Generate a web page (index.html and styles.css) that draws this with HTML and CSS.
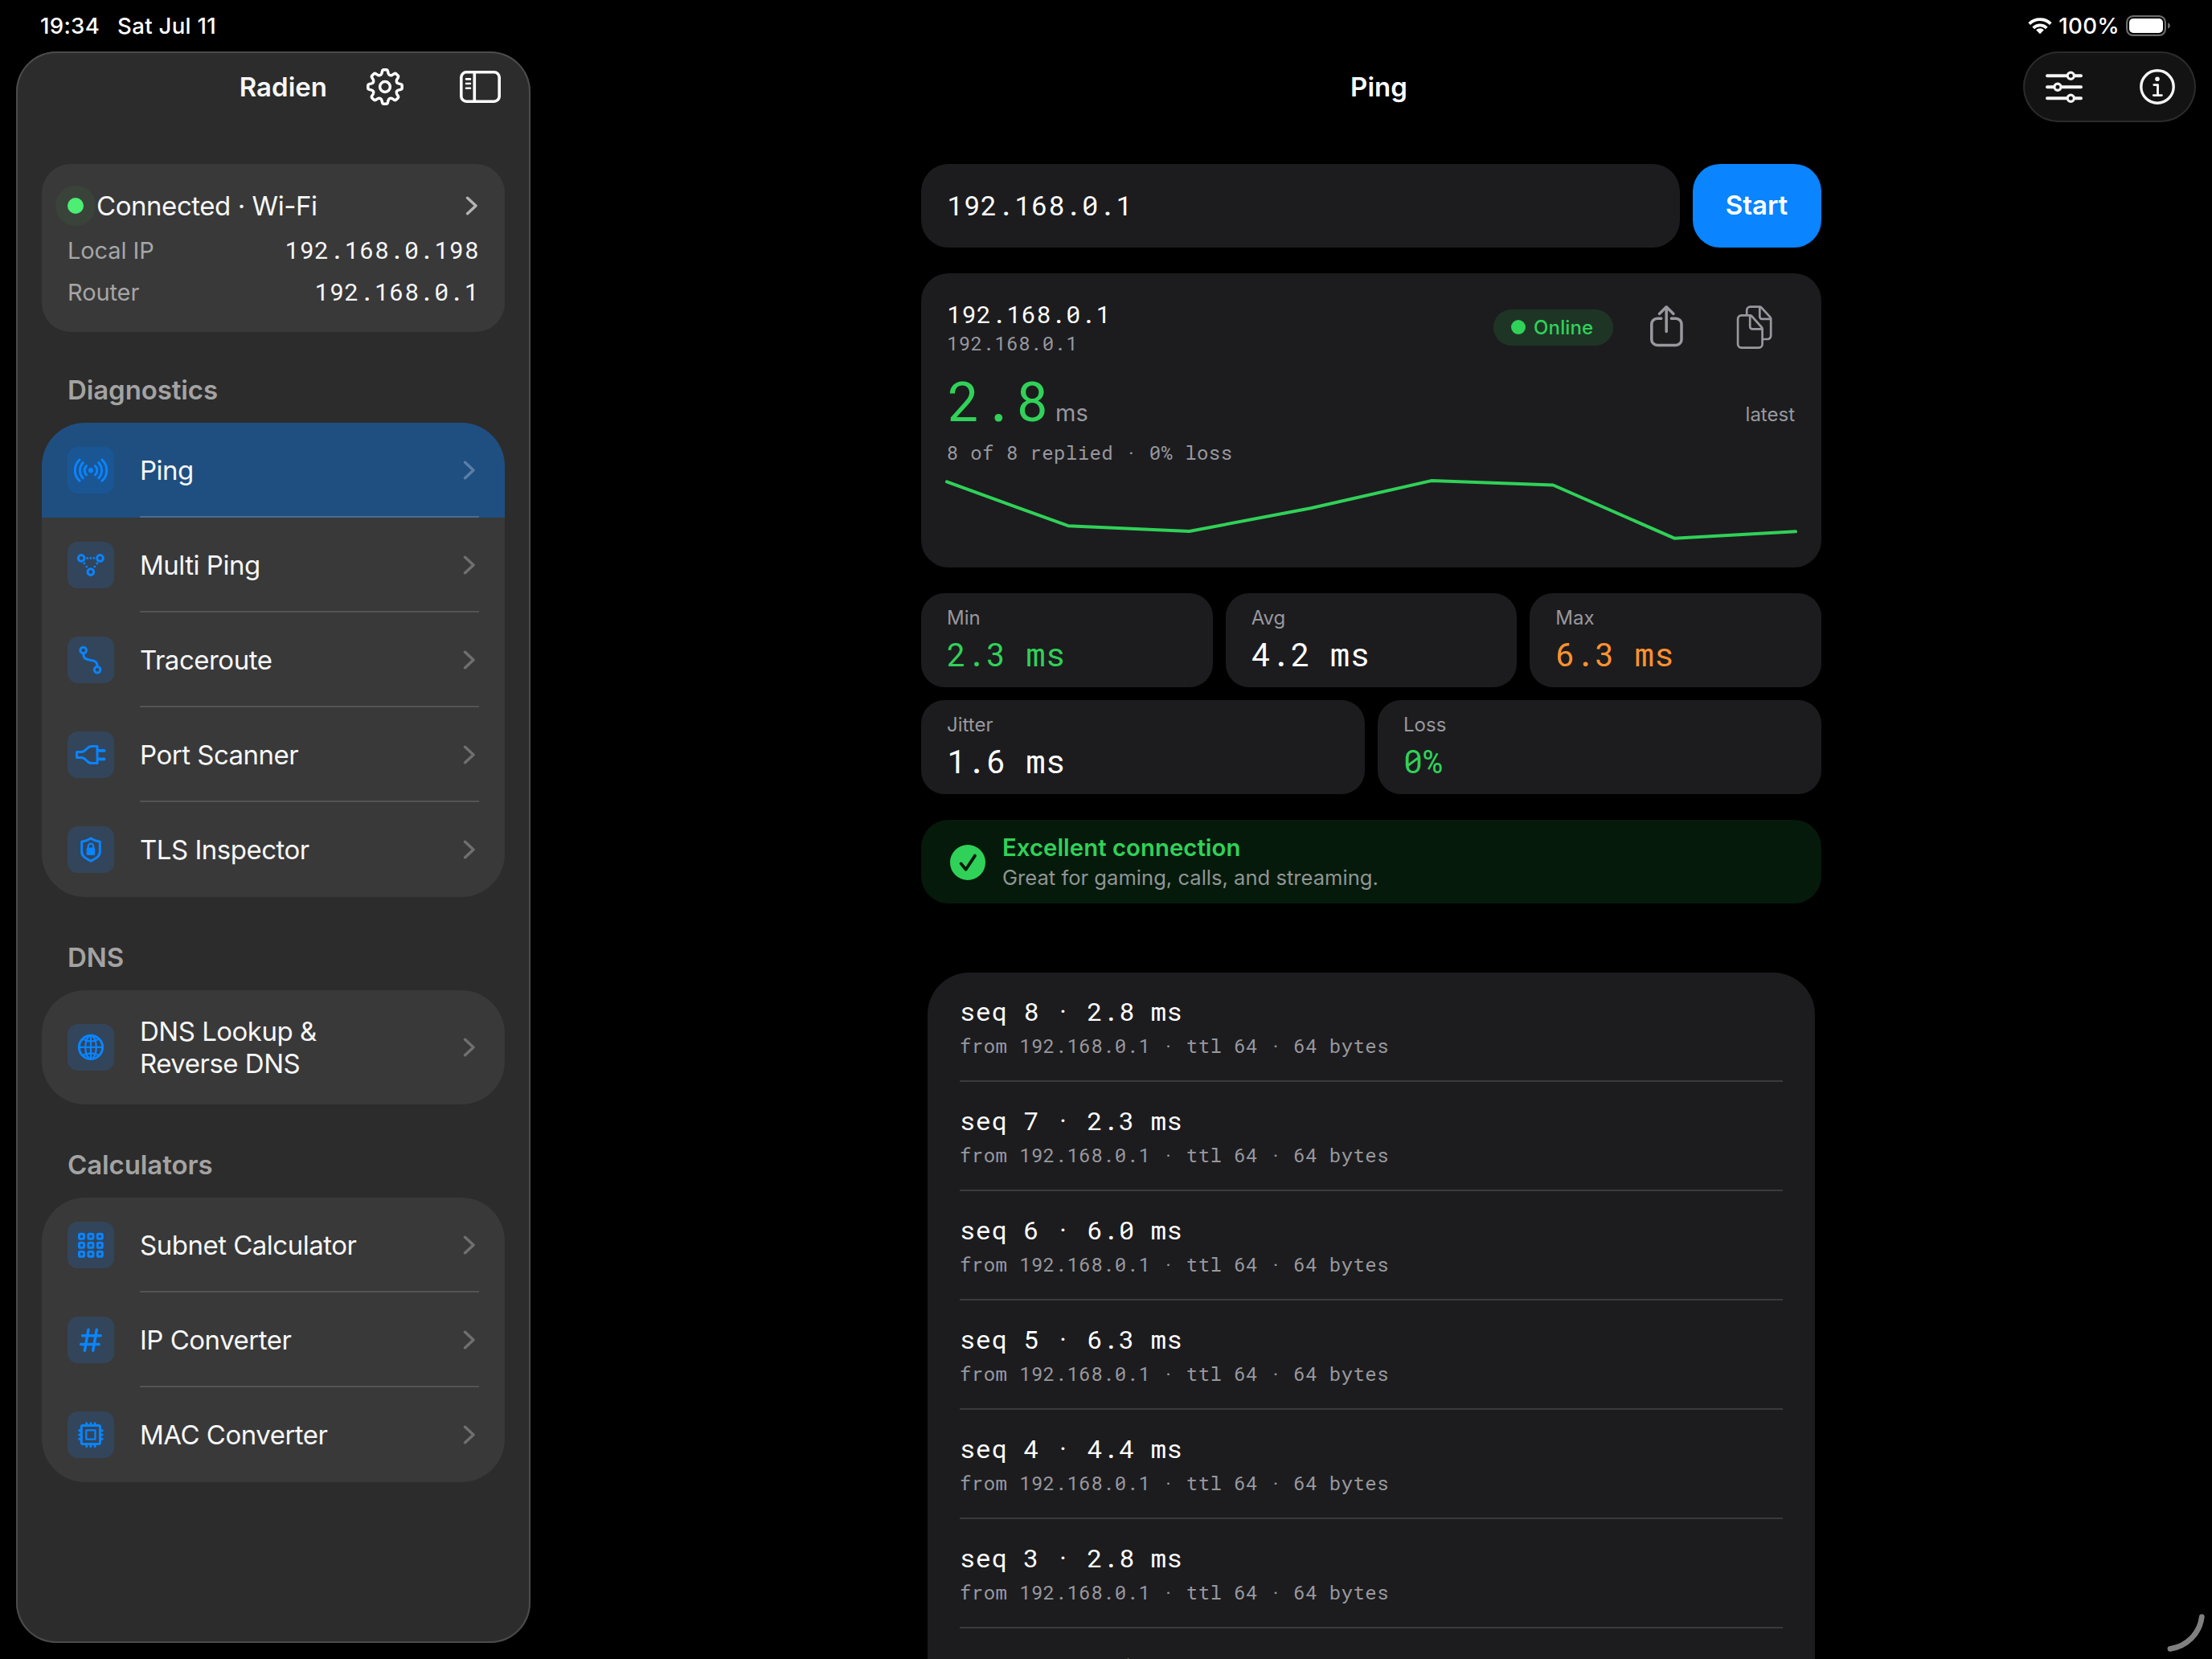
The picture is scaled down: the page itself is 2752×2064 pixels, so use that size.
FILE: index.html
```
<!DOCTYPE html>
<html lang="en">
<head>
<meta charset="utf-8">
<title>Radien</title>
<link rel="stylesheet" href="styles.css">
</head>
<body>
<svg class="defs" aria-hidden="true">
  <symbol id="chevron" viewBox="0 0 16 24"><path d="M2.6 2.3 13 12 2.6 21.7"/></symbol>
  <path id="tooth" d="M-6-14.5Q-4.5-15.1-4.1-16.6L-3.4-19.6Q-3-21.2-1.5-21.2H1.5Q3-21.2 3.4-19.6L4.1-16.6Q4.5-15.1 6-14.5"/>
</svg>

<header class="status">
  <span class="status-time">19:34</span>
  <span class="status-date">Sat Jul 11</span>
  <svg class="wifi" width="32" height="24" viewBox="0 0 32 24"><path class="line" d="M2.7 9.6A19 19 0 0 1 29.3 9.6M7.7 14.8A11.8 11.8 0 0 1 24.3 14.8"/><path class="fill" d="M16 22.3l-4.9-5a7 7 0 0 1 9.8 0z"/></svg>
  <span class="status-battery">100%</span>
  <svg width="56" height="26" viewBox="0 0 56 26"><rect x="1.1" y="1.1" width="47.8" height="23.8" rx="7.6" fill="none" stroke="#6c6c6c" stroke-width="2.2"/><rect x="4" y="4" width="42" height="18" rx="5" fill="#fff"/><path d="M52 9.2q3 1.2 3 3.8t-3 3.8z" fill="#6c6c6c"/></svg>
</header>

<div class="app">
  <aside class="sidebar">
    <div class="sidebar-bar">
      <h1 class="title">Radien</h1>
      <svg class="icon gear" width="46" height="46" viewBox="-23 -23 46 46"><use href="#tooth"/><use href="#tooth" transform="rotate(45)"/><use href="#tooth" transform="rotate(90)"/><use href="#tooth" transform="rotate(135)"/><use href="#tooth" transform="rotate(180)"/><use href="#tooth" transform="rotate(225)"/><use href="#tooth" transform="rotate(270)"/><use href="#tooth" transform="rotate(315)"/><circle r="6.4"/></svg>
      <svg class="icon panel" width="51" height="40" viewBox="0 0 51 40"><rect x="1.8" y="1.8" width="47.4" height="36.4" rx="6.5"/><path d="M18.3 2v36"/><path class="thin" d="M8 10.4h5M8 16h5M8 21.7h5"/></svg>
    </div>

    <section class="network">
      <div class="network-head">
        <i class="pulse"></i>
        <span class="network-name">Connected · Wi-Fi</span>
        <svg class="chevron bright" width="16" height="24"><use href="#chevron"/></svg>
      </div>
      <div class="network-row"><span>Local IP</span><b class="mono">192.168.0.198</b></div>
      <div class="network-row"><span>Router</span><b class="mono">192.168.0.1</b></div>
    </section>

    <h2 class="group-title first">Diagnostics</h2>
    <nav class="group">
      <a class="item active">
        <svg class="tile" viewBox="0 0 58 58"><circle class="solid" cx="29" cy="29.2" r="3.1"/><path d="M15 16.2A17.7 17.7 0 0 0 15 42.2M19.2 19.7A14 14 0 0 0 19.2 38.7M23.6 23.6A7.6 7.6 0 0 0 23.6 34.8M43 16.2A17.7 17.7 0 0 1 43 42.2M38.8 19.7A14 14 0 0 1 38.8 38.7M34.4 23.6A7.6 7.6 0 0 1 34.4 34.8"/></svg>
        <span class="label">Ping</span>
        <svg class="chevron" width="16" height="24"><use href="#chevron"/></svg>
      </a>
      <a class="item">
        <svg class="tile" viewBox="0 0 58 58"><circle cx="17.2" cy="20.4" r="3.8"/><circle cx="40.5" cy="20.4" r="3.8"/><circle cx="28.8" cy="37.6" r="3.8"/><g class="solid"><circle cx="24.7" cy="20.4" r="1.4"/><circle cx="28.8" cy="20.4" r="1.4"/><circle cx="32.9" cy="20.4" r="1.4"/><circle cx="20.9" cy="27" r="1.4"/><circle cx="23.8" cy="31.1" r="1.4"/><circle cx="36.7" cy="27" r="1.4"/><circle cx="33.8" cy="31.1" r="1.4"/></g></svg>
        <span class="label">Multi Ping</span>
        <svg class="chevron" width="16" height="24"><use href="#chevron"/></svg>
      </a>
      <a class="item">
        <svg class="tile" viewBox="0 0 58 58"><circle cx="19.7" cy="17" r="3.8"/><circle cx="37.1" cy="41.2" r="3.8"/><path d="M19.7 21.3C19.7 27 22.4 28.2 28.4 29.2 34.4 30.2 37.1 31.6 37.1 36.9"/></svg>
        <span class="label">Traceroute</span>
        <svg class="chevron" width="16" height="24"><use href="#chevron"/></svg>
      </a>
      <a class="item">
        <svg class="tile" viewBox="0 0 58 58"><path d="M11.6 25.6H17.2C23.6 25.6 23.2 18.4 30.2 18.4H37V39.6H30.2C23.2 39.6 23.6 32.5 17.2 32.5H11.6Z"/><path class="prong" d="M38.5 23.9H45.6M38.5 34.3H45.6"/></svg>
        <span class="label">Port Scanner</span>
        <svg class="chevron" width="16" height="24"><use href="#chevron"/></svg>
      </a>
      <a class="item">
        <svg class="tile" viewBox="0 0 58 58"><path d="M29 15C25.6 17.4 21.6 18.7 17.7 19.2V31.4C17.7 36.8 21.6 39.6 29 43.2 36.4 39.6 40.3 36.8 40.3 31.4V19.2C36.4 18.7 32.4 17.4 29 15Z"/><rect class="solid" x="23.6" y="26.6" width="10.6" height="9.4" rx="1.6"/><path class="hair" d="M25.7 27.4V24.9a3.25 3.25 0 0 1 6.5 0V27.4"/></svg>
        <span class="label">TLS Inspector</span>
        <svg class="chevron" width="16" height="24"><use href="#chevron"/></svg>
      </a>
    </nav>

    <h2 class="group-title">DNS</h2>
    <nav class="group">
      <a class="item tall">
        <svg class="tile" viewBox="0 0 58 58"><circle cx="29" cy="28.9" r="14.6"/><g class="hair"><ellipse cx="29" cy="28.9" rx="6.8" ry="14.4"/><path d="M29 14.5V43.3M14.5 28.9H43.5M18.4 18.6Q29 24.4 39.6 18.6M18.4 39.2Q29 33.4 39.6 39.2"/></g></svg>
        <span class="label">DNS Lookup &amp;<br>Reverse DNS</span>
        <svg class="chevron" width="16" height="24"><use href="#chevron"/></svg>
      </a>
    </nav>

    <h2 class="group-title">Calculators</h2>
    <nav class="group">
      <a class="item">
        <svg class="tile" viewBox="0 0 58 58"><rect x="14.5" y="15.3" width="6" height="6" rx="1.3"/><rect x="25.9" y="15.3" width="6" height="6" rx="1.3"/><rect x="37.3" y="15.3" width="6" height="6" rx="1.3"/><rect x="14.5" y="26.2" width="6" height="6" rx="1.3"/><rect x="25.9" y="26.2" width="6" height="6" rx="1.3"/><rect x="37.3" y="26.2" width="6" height="6" rx="1.3"/><rect x="14.5" y="37.2" width="6" height="6" rx="1.3"/><rect x="25.9" y="37.2" width="6" height="6" rx="1.3"/><rect x="37.3" y="37.2" width="6" height="6" rx="1.3"/></svg>
        <span class="label">Subnet Calculator</span>
        <svg class="chevron" width="16" height="24"><use href="#chevron"/></svg>
      </a>
      <a class="item">
        <svg class="tile" viewBox="0 0 58 58"><path class="hash" d="M26 16.2 21.4 42.4M36.3 16.2 31.7 42.4M18.6 23.7H41.2M16.6 34.4H39.2"/></svg>
        <span class="label">IP Converter</span>
        <svg class="chevron" width="16" height="24"><use href="#chevron"/></svg>
      </a>
      <a class="item">
        <svg class="tile" viewBox="0 0 58 58"><rect x="17.3" y="17.4" width="23.2" height="23.2" rx="1.8"/><rect class="hair" x="23.3" y="23.4" width="11.2" height="11.2"/><path d="M23.7 16V14.8M28.9 16V14.8M34.1 16V14.8M23.7 42V43.4M28.9 42V43.4M34.1 42V43.4M16 23.8H14.7M16 29H14.7M16 34.2H14.7M42 23.8H43.2M42 29H43.2M42 34.2H43.2"/></svg>
        <span class="label">MAC Converter</span>
        <svg class="chevron" width="16" height="24"><use href="#chevron"/></svg>
      </a>
    </nav>
  </aside>

  <main class="main">
    <div class="main-bar">
      <h1 class="title">Ping</h1>
      <div class="tools">
        <svg class="icon sliders" width="50" height="48" viewBox="0 0 50 48"><path d="M4 10.3H46M4 24.3H46M4 38.3H46"/><g class="knobs"><circle cx="33.3" cy="10.3" r="4.1"/><circle cx="17" cy="24.3" r="4.1"/><circle cx="33.3" cy="38.3" r="4.1"/></g></svg>
        <svg class="icon info" width="46" height="46" viewBox="0 0 46 46"><circle cx="23" cy="23" r="20.2"/><circle class="dot" cx="23" cy="13.3" r="2.8"/><path d="M18.8 20.6H23.5V33.2M18.3 33.6H28.4"/></svg>
      </div>
    </div>

    <div class="content">
      <div class="search">
        <div class="field mono">192.168.0.1</div>
        <button class="start">Start</button>
      </div>

      <section class="result">
        <div class="result-head">
          <div class="host"><div class="host-name mono">192.168.0.1</div><div class="host-ip mono">192.168.0.1</div></div>
          <div class="badge"><i class="badge-dot"></i>Online</div>
          <svg class="icon share" width="44" height="56" viewBox="0 0 44 56"><path d="M15.8 18.2H10.8a7 7 0 0 0-7 7V44.4a7 7 0 0 0 7 7H34a7 7 0 0 0 7-7V25.2a7 7 0 0 0-7-7H28.4M22.2 34.6V4M13.4 12.4 22.2 3.8 31 12.4"/></svg>
          <svg class="icon copy" width="48" height="58" viewBox="0 0 48 58"><path d="M18.2 14.3H7.5a4.4 4.4 0 0 0-4.4 4.4V50.2a4.4 4.4 0 0 0 4.4 4.4H29.2a4.4 4.4 0 0 0 4.4-4.4V31.2Q33.6 30 32.6 29L20.2 15.2Q19.4 14.3 18.2 14.3V28.4a3 3 0 0 0 3 3H33.4M14.2 13.8V8.1a4.4 4.4 0 0 1 4.4-4.4H30.2Q31.4 3.7 32.2 4.5L43.2 16.4Q44.2 17.4 44.2 18.6V39.6a4.4 4.4 0 0 1-4.4 4.4H34.6M30.3 4.2V16a2.8 2.8 0 0 0 2.8 2.8H44"/></svg>
        </div>
        <div class="latency"><span class="latency-value mono">2.8</span><span class="latency-unit">ms</span><span class="latency-note">latest</span></div>
        <div class="replies mono">8 of 8 replied · 0% loss</div>
        <svg class="chart" width="1056" height="90" viewBox="0 0 1056 90"><polyline points="0,8.4 150.9,63.2 301.7,70 452.6,41.2 603.4,7 754.3,12.5 905.1,78.7 1056,70.3"/></svg>
      </section>

      <section class="stats">
        <div class="stats-row">
          <div class="stat"><div class="stat-name">Min</div><div class="stat-value mono good">2.3 ms</div></div>
          <div class="stat"><div class="stat-name">Avg</div><div class="stat-value mono">4.2 ms</div></div>
          <div class="stat"><div class="stat-name">Max</div><div class="stat-value mono warn">6.3 ms</div></div>
        </div>
        <div class="stats-row">
          <div class="stat"><div class="stat-name">Jitter</div><div class="stat-value mono">1.6 ms</div></div>
          <div class="stat"><div class="stat-name">Loss</div><div class="stat-value mono good">0%</div></div>
        </div>
      </section>

      <section class="verdict">
        <svg width="44" height="44" viewBox="0 0 44 44"><circle cx="22" cy="22" r="22" fill="#30d158"/><path d="M13.6 23.4 19.6 30.8 31 13.6" fill="none" stroke="#061a0b" stroke-width="3.8" stroke-linecap="round" stroke-linejoin="round"/></svg>
        <div><div class="verdict-title">Excellent connection</div><div class="verdict-text">Great for gaming, calls, and streaming.</div></div>
      </section>

      <section class="log mono">
        <div class="entry"><div class="entry-main">seq 8 · 2.8 ms</div><div class="entry-sub">from 192.168.0.1 · ttl 64 · 64 bytes</div></div>
        <div class="entry"><div class="entry-main">seq 7 · 2.3 ms</div><div class="entry-sub">from 192.168.0.1 · ttl 64 · 64 bytes</div></div>
        <div class="entry"><div class="entry-main">seq 6 · 6.0 ms</div><div class="entry-sub">from 192.168.0.1 · ttl 64 · 64 bytes</div></div>
        <div class="entry"><div class="entry-main">seq 5 · 6.3 ms</div><div class="entry-sub">from 192.168.0.1 · ttl 64 · 64 bytes</div></div>
        <div class="entry"><div class="entry-main">seq 4 · 4.4 ms</div><div class="entry-sub">from 192.168.0.1 · ttl 64 · 64 bytes</div></div>
        <div class="entry"><div class="entry-main">seq 3 · 2.8 ms</div><div class="entry-sub">from 192.168.0.1 · ttl 64 · 64 bytes</div></div>
        <div class="entry"><div class="entry-main">seq 2 · 3.1 ms</div></div>
      </section>
    </div>
  </main>
</div>

<svg class="resize-handle" width="64" height="64" viewBox="0 0 64 64"><path d="M51.3 11.7A45.7 45.7 0 0 1 12 51.3"/></svg>
</body>
</html>
```
FILE: styles.css
```
* { box-sizing: border-box; }

body {
  margin: 0;
  width: 2752px;
  height: 2064px;
  overflow: hidden;
  position: relative;
  background: #000;
  color: #fff;
  font-family: Inter, "Liberation Sans", sans-serif;
}

h1, h2 { margin: 0; }
svg { display: block; flex: none; }
.defs { position: absolute; width: 0; height: 0; }

.mono {
  font-family: "Roboto Mono", "DejaVu Sans Mono", monospace;
  letter-spacing: 0.018em;
  font-weight: 400;
  white-space: nowrap;
}

/* Status bar */
.status {
  display: flex;
  align-items: center;
  height: 64px;
  padding: 0 51px 0 50px;
  font-size: 27.6px;
  font-weight: 500;
  line-height: 64px;
  letter-spacing: 0.3px;
}
.status-date { margin-left: 22px; }
.wifi { margin-left: auto; }
.wifi .line { fill: none; stroke: #fff; stroke-width: 3.9; }
.wifi .fill { fill: #fff; }
.status-battery { margin: 0 8px 0 7px; }

.app { display: flex; height: 2000px; overflow: hidden; }

.title {
  font-size: 33px;
  font-weight: 600;
  line-height: 40px;
}
.icon {
  fill: none;
  stroke: #f5f5f5;
  stroke-linecap: round;
  stroke-linejoin: round;
}

/* Sidebar */
.sidebar {
  flex: none;
  width: 640px;
  height: 1980px;
  margin-left: 20px;
  border-radius: 50px;
  background: #2c2c2c;
  box-shadow: inset 0 0 0 2px #4b4b4b;
  color: #f7f7f7;
}
.sidebar-bar {
  display: flex;
  align-items: center;
  justify-content: flex-end;
  height: 88px;
  padding-right: 37px;
}
.gear { margin: 0 70px 0 49px; stroke-width: 3.5; stroke: #fff; }
.panel { stroke-width: 3.6; stroke: #fff; }
.panel .thin { stroke-width: 2.6; }

.network {
  height: 209px;
  margin: 52px 32px 0;
  padding: 32px 32px 0 32px;
  border-radius: 36px;
  background: #393939;
}
.network-head {
  display: flex;
  align-items: center;
  height: 40px;
  margin-bottom: 10px;
}
.pulse {
  width: 20px;
  height: 20px;
  margin-right: 16px;
  border-radius: 50%;
  background: #4cee74;
  box-shadow: 0 0 0 15px #3a4339;
}
.network-name { font-size: 33px; line-height: 40px; letter-spacing: -0.45px; }
.network-row {
  display: flex;
  align-items: baseline;
  justify-content: space-between;
  height: 52px;
  font-size: 29px;
  line-height: 50px;
  letter-spacing: -0.1px;
  color: #a6a6a6;
}
.network-row .mono { font-size: 30px; letter-spacing: 0.6px; color: #f7f7f7; }

.chevron { fill: none; stroke: #6f6f6f; stroke-width: 3.5; stroke-linecap: round; stroke-linejoin: round; }
.chevron.bright { margin: 0 1px 0 auto; stroke: #b3b3b3; }

.group-title {
  margin: 55px 0 21px 64px;
  font-size: 33px;
  font-weight: 600;
  line-height: 40px;
  letter-spacing: -0.1px;
  color: #a3a3a3;
}
.group-title.first { margin-top: 52px; }

.group {
  margin: 0 32px;
  border-radius: 54px;
  overflow: hidden;
  background: #393939;
}
.item {
  display: flex;
  align-items: center;
  position: relative;
  height: 118px;
  padding: 0 36px 0 32px;
}
.item.tall { height: 142px; }
.item:not(:last-child)::after {
  content: "";
  position: absolute;
  left: 122px;
  right: 32px;
  bottom: 0;
  height: 2px;
  background: #545454;
}
.item.active { background: #1f4f80; }
.item.active::after { background: #4a6d92 !important; }
.item.active .tile { background: #1b5694; }
.item.active .chevron { stroke: #5a7fa5; }
.label {
  flex: 1;
  font-size: 33px;
  line-height: 40px;
  letter-spacing: -0.5px;
}

.tile {
  width: 58px;
  height: 58px;
  margin-right: 32px;
  border-radius: 13px;
  background: #33455a;
  fill: none;
  stroke: #0a84ff;
  stroke-width: 3;
  stroke-linecap: round;
  stroke-linejoin: round;
}
.tile .solid { fill: #0a84ff; stroke: none; }
.tile .hair { stroke-width: 2.3; }
.tile .prong { stroke-width: 3.8; }
.tile .hash { stroke-width: 3.5; }

/* Main column */
.main { flex: 1; }
.main-bar {
  display: grid;
  grid-template-columns: 1fr auto 1fr;
  align-items: center;
  height: 88px;
  padding: 0 20px 0 39px;
}
.main-bar .title { grid-column: 2; }
.tools {
  justify-self: end;
  display: flex;
  align-items: center;
  justify-content: space-between;
  width: 215px;
  height: 88px;
  padding: 0 25px 0 26px;
  border-radius: 44px;
  background: #131313;
  box-shadow: inset 0 0 0 2px #2b2b2b;
}
.sliders { stroke-width: 4; }
.sliders .knobs { fill: #131313; stroke-width: 3.2; }
.info { stroke-width: 3.4; }
.info path { stroke-width: 2.9; }
.info .dot { fill: #f5f5f5; stroke: none; }

.content { width: 1120px; margin: 52px auto 0; }

.search { display: flex; gap: 16px; height: 104px; }
.field {
  flex: 1;
  padding-left: 32px;
  border-radius: 34px;
  background: #1c1c1e;
  font-size: 34px;
  line-height: 102px;
}
.start {
  width: 160px;
  padding: 0 1px 2px 0;
  border: 0;
  border-radius: 34px;
  background: #0a84ff;
  color: #fff;
  font: 600 33px/40px Inter, "Liberation Sans", sans-serif;
}

.result {
  height: 366px;
  margin-top: 32px;
  padding: 31px 32px 0;
  border-radius: 34px;
  background: #1c1c1e;
}
.result-head { display: flex; align-items: center; height: 72px; padding-right: 27px; }
.host { flex: 1; }
.host-name { font-size: 30px; line-height: 40px; }
.host-ip { font-size: 24px; line-height: 32px; color: #98989f; }
.badge {
  display: flex;
  align-items: center;
  width: 149px;
  height: 45px;
  padding-left: 22px;
  border-radius: 23px;
  background: #1e3526;
  color: #30d158;
  font-size: 24px;
  font-weight: 500;
  letter-spacing: 0.15px;
}
.badge-dot { width: 18px; height: 18px; margin-right: 10px; border-radius: 50%; background: #30d158; }
.share { margin: -3px 64px 0 44px; stroke: #98989f; stroke-width: 3.5; }
.copy { stroke: #98989f; stroke-width: 2.7; }

.latency { display: flex; align-items: baseline; height: 80px; margin-top: 15px; padding: 0 1px; color: #98989f; }
.latency-value { font-size: 68px; line-height: 80px; color: #30d158; }
.latency-unit { margin-left: 8px; font-size: 29px; }
.latency-note { margin-left: auto; font-size: 24px; }
.replies { margin: 9px 0 12px -0.5px; font-size: 24px; line-height: 32px; color: #98989f; }
.chart { overflow: visible; }
.chart polyline { fill: none; stroke: #30d158; stroke-width: 4; stroke-linecap: round; stroke-linejoin: round; }

.stats { display: grid; gap: 16px; margin-top: 32px; }
.stats-row { display: flex; gap: 16px; }
.stat {
  flex: 1;
  height: 117px;
  padding: 15px 32px 0;
  border-radius: 29px;
  background: #1c1c1e;
}
.stat-name { font-size: 24px; line-height: 32px; color: #98989f; }
.stat-value { margin-top: 5px; font-size: 40px; line-height: 48px; letter-spacing: 0.6px; }
.good { color: #30d158; }
.warn { color: #ff9230; }

.verdict {
  display: flex;
  align-items: center;
  gap: 21px;
  height: 104px;
  margin-top: 32px;
  padding: 1px 0 0 36px;
  border-radius: 34px;
  background: #061a0b;
}
.verdict-title { font-size: 29.3px; font-weight: 600; line-height: 38px; letter-spacing: 0.05px; color: #30d158; }
.verdict-text { font-size: 25.6px; line-height: 36px; color: #8f9594; }

.log {
  width: 1104px;
  margin: 86px auto 0;
  padding: 0 40px;
  border-radius: 52px 52px 0 0;
  background: #1c1c1e;
}
.entry { height: 136px; padding-top: 28px; border-bottom: 2px solid #3a3a3c; }
.entry-main { font-size: 32px; line-height: 40px; letter-spacing: 0.6px; }
.entry-sub { margin-top: 7px; font-size: 24px; line-height: 32px; letter-spacing: 0.43px; color: #98989f; }

.resize-handle { position: absolute; right: 0; bottom: 0; }
.resize-handle path { fill: none; stroke: #808080; stroke-width: 6.8; stroke-linecap: round; }
```
